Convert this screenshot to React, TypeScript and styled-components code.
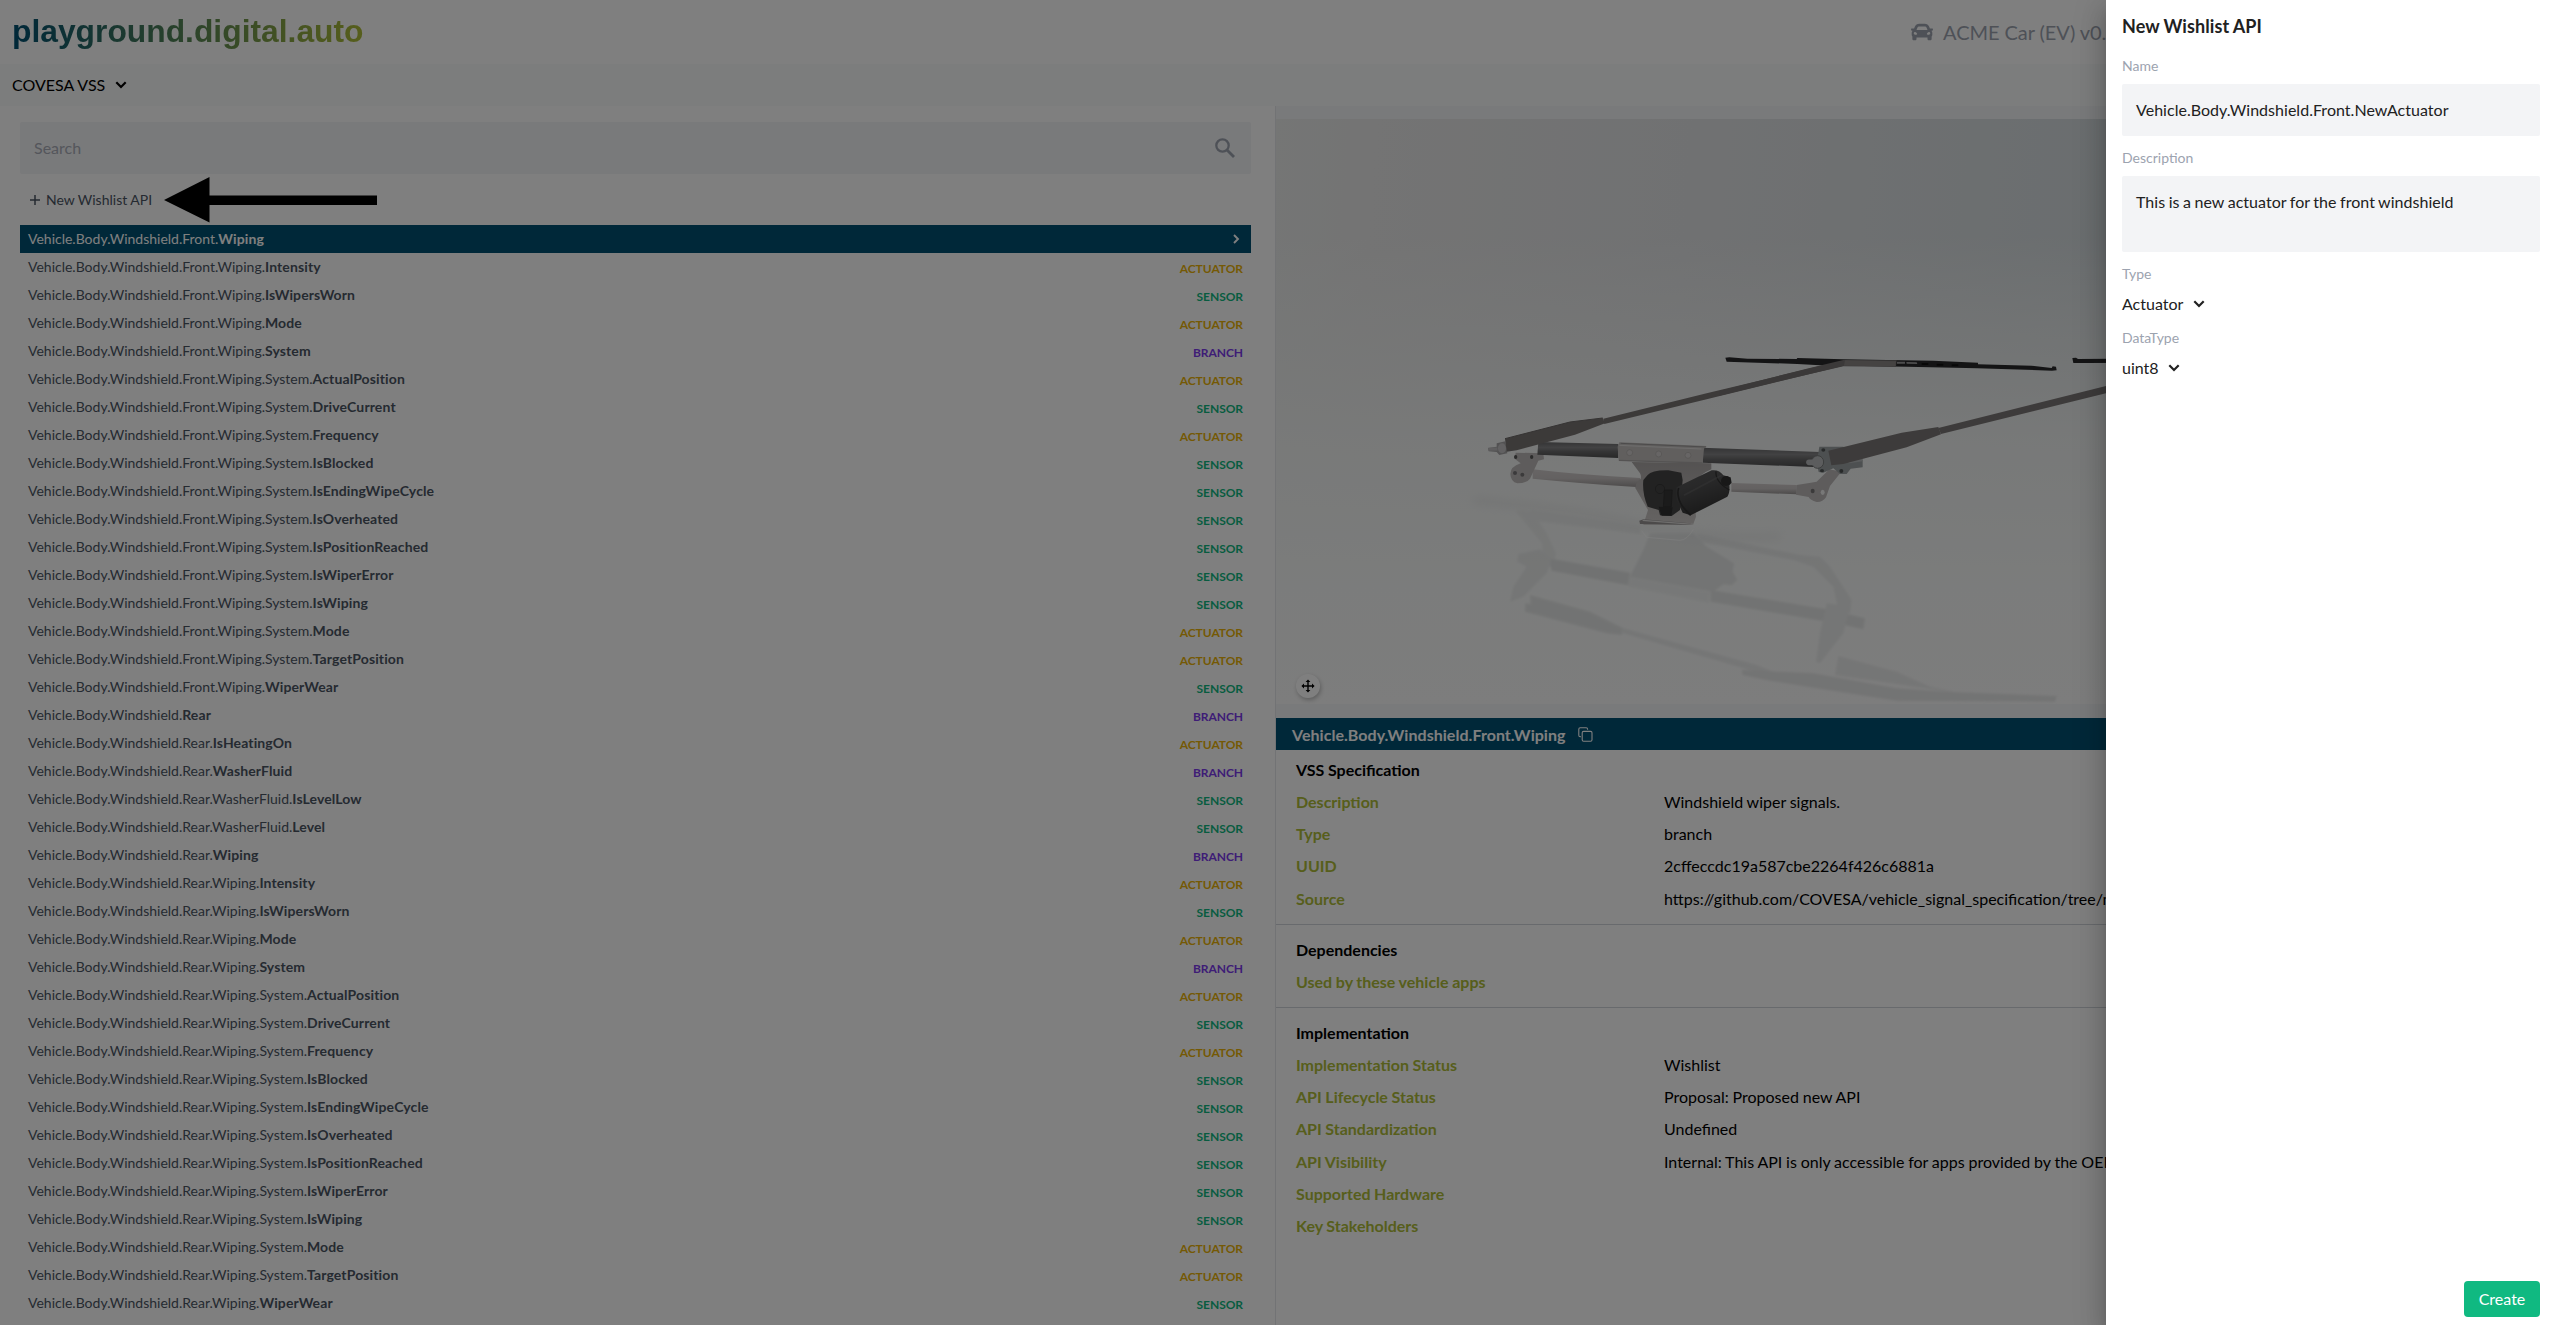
import React from "react";
import styled, { createGlobalStyle } from "styled-components";
import { FaCar } from "react-icons/fa";

const GlobalStyle = createGlobalStyle`
  *, *::before, *::after { box-sizing: border-box; }
  html, body { margin: 0; padding: 0; background: #fff; }
  body { overflow: hidden; font-family: Lato, "Open Sans", sans-serif; font-size: 16px; word-spacing: -0.3px; color: #000; }
`;

const Page = styled.div`
  display: flex;
  flex-direction: column;
  width: 2550px;
  height: 1325px;
  overflow: hidden;
  position: relative;
`;

const Header = styled.header`
  display: flex;
  align-items: center;
  justify-content: space-between;
  height: 64px;
  flex: none;
  padding: 0 16px 0 12px;
`;

const Logo = styled.div`
  font: 700 31.8px/40px "Liberation Sans", Arial, sans-serif;
  padding-bottom: 2px;
  color: transparent;
  background: linear-gradient(90deg, #005072, #aebd38);
  background-clip: text;
  -webkit-background-clip: text;
  white-space: nowrap;
`;

const ModelName = styled.div`
  display: flex;
  align-items: center;
  gap: 10px;
  width: 623px;
  font-size: 20px;
  line-height: 28px;
  word-spacing: -0.3px;
  color: #9ca3af;
  white-space: nowrap;
`;

const SubHeader = styled.div`
  display: flex;
  align-items: center;
  height: 42px;
  flex: none;
  padding: 0 12px;
  background: #f9fafb;
`;

const Select = styled.button<{ $gap?: number }>`
  display: flex;
  align-items: center;
  gap: ${(p) => p.$gap ?? 10}px;
  padding: 0;
  border: 0;
  background: none;
  font: inherit;
  line-height: 24px;
  color: inherit;
`;

const Columns = styled.main`
  display: flex;
  flex: 1;
  min-height: 0;
`;

const ListPanel = styled.section`
  width: 1275px;
  flex: none;
  padding: 16px 24px 0 20px;
  overflow: hidden;
`;

const SearchBox = styled.div`
  display: flex;
  align-items: center;
  justify-content: space-between;
  height: 52px;
  padding: 0 16px 1px 14px;
  border-radius: 2px;
  background: #f3f4f6;
  color: #a9adb8;
  svg { color: #9ca3af; }
`;

const NewApiRow = styled.div`
  display: flex;
  align-items: center;
  gap: 6px;
  height: 51px;
  padding: 0 0 0 10px;
  font-size: 14px;
  letter-spacing: 0.03px;
  color: #4b5563;
`;

const ApiRow = styled.div<{ $selected?: boolean }>`
  display: flex;
  align-items: center;
  justify-content: space-between;
  height: 28px;
  padding: 0 8px;
  font-size: 14px;
  line-height: 20px;
  background: ${(p) => (p.$selected ? "#005072" : "transparent")};
  color: ${(p) => (p.$selected ? "#fff" : "#4b5563")};
  b { font-weight: 700; letter-spacing: 0.12px; }
`;

const kindColor = { ACTUATOR: "#eab308", SENSOR: "#10b981", BRANCH: "#7c3aed" };
type Kind = keyof typeof kindColor;

const KindTag = styled.span<{ $kind: Kind }>`
  padding-top: 3px;
  font-size: 12px;
  line-height: 16px;
  font-weight: 700;
  letter-spacing: -0.05px;
  color: ${(p) => kindColor[p.$kind]};
`;

const DetailPanel = styled.section`
  display: flex;
  flex-direction: column;
  flex: 1;
  min-width: 0;
  border-left: 1px solid #e5e7eb;
`;

const Stage = styled.div`
  height: 612px;
  flex: none;
  padding: 13px 0 14px;
  background: #f3f4f6;
  position: relative;
  > svg { display: block; }
`;

const MoveButton = styled.div`
  position: absolute;
  left: 20px;
  top: 568px;
  width: 24px;
  height: 24px;
  border-radius: 50%;
  display: flex;
  align-items: center;
  justify-content: center;
  background: #fff;
  box-shadow: 1px 2px 4px rgba(0, 0, 0, 0.25);
`;

const DetailTitle = styled.div`
  display: flex;
  align-items: center;
  gap: 12px;
  height: 32px;
  flex: none;
  padding: 0 16px;
  background: #005072;
  color: #fff;
  font-weight: 700;
  letter-spacing: 0.04px;
`;

const DetailBlock = styled.div<{ $height: number }>`
  height: ${(p) => p.$height}px;
  flex: none;
  padding: 4px 20px 0;
  & + & { border-top: 1px solid #d1d5db; padding-top: 9px; }
`;

const BlockTitle = styled.div`
  height: 32px;
  line-height: 32px;
  font-weight: 700;
`;

const Entry = styled.div<{ $tall?: boolean }>`
  display: grid;
  grid-template-columns: 368px 1fr;
  height: ${(p) => (p.$tall ? 33 : 32)}px;
  line-height: ${(p) => (p.$tall ? 34 : 32)}px;
  white-space: nowrap;
`;

const EntryLabel = styled.span`
  font-weight: 700;
  color: #aebd38;
`;

const Arrow = styled.svg`
  position: absolute;
  left: 164px;
  top: 177px;
`;

const Backdrop = styled.div`
  position: absolute;
  inset: 0;
  background: rgba(0, 0, 0, 0.5);
`;

const Drawer = styled.aside`
  position: absolute;
  top: 0;
  right: 0;
  bottom: 0;
  width: 444px;
  display: flex;
  flex-direction: column;
  padding: 12px 10px 8px 16px;
  background: #fff;
  color: #212121;
  box-shadow: 0 8px 10px -5px rgba(0, 0, 0, 0.2), 0 16px 24px 2px rgba(0, 0, 0, 0.14),
    0 6px 30px 5px rgba(0, 0, 0, 0.12);
`;

const DrawerTitle = styled.h2`
  margin: 0 0 16px;
  font-size: 18px;
  line-height: 28px;
  font-weight: 700;
  letter-spacing: 0.08px;
`;

const FieldLabel = styled.label`
  font-size: 14px;
  line-height: 20px;
  color: #9ca3af;
`;

const Field = styled.div<{ $height: number; $after: number }>`
  height: ${(p) => p.$height}px;
  margin: 8px 0 ${(p) => p.$after}px;
  padding: 14px;
  line-height: 24px;
  letter-spacing: 0.03px;
  word-spacing: -0.6px;
  border-radius: 2px;
  background: #f3f4f6;
`;

const SelectField = styled.div`
  margin: 8px 0 12px;
`;

const Footer = styled.div`
  display: flex;
  justify-content: flex-end;
  margin-top: auto;
`;

const CreateButton = styled.button`
  width: 76px;
  height: 36px;
  padding: 0;
  border: 0;
  border-radius: 4px;
  background: #10b981;
  color: #fff;
  font: 16px/24px Lato, sans-serif;
`;

const ChevronDown = () => (
  <svg width="12" height="8" viewBox="0 0 12 8" fill="none" stroke="currentColor" strokeWidth="2.2">
    <path d="M1.3 1.3 6 6 10.7 1.3" />
  </svg>
);

const front = "Vehicle.Body.Windshield.Front.";
const rear = "Vehicle.Body.Windshield.Rear.";

const wiping = (side: string): [string, string, Kind][] => {
  const w = side + "Wiping.";
  const s = w + "System.";
  return [
    [w, "Intensity", "ACTUATOR"],
    [w, "IsWipersWorn", "SENSOR"],
    [w, "Mode", "ACTUATOR"],
    [w, "System", "BRANCH"],
    [s, "ActualPosition", "ACTUATOR"],
    [s, "DriveCurrent", "SENSOR"],
    [s, "Frequency", "ACTUATOR"],
    [s, "IsBlocked", "SENSOR"],
    [s, "IsEndingWipeCycle", "SENSOR"],
    [s, "IsOverheated", "SENSOR"],
    [s, "IsPositionReached", "SENSOR"],
    [s, "IsWiperError", "SENSOR"],
    [s, "IsWiping", "SENSOR"],
    [s, "Mode", "ACTUATOR"],
    [s, "TargetPosition", "ACTUATOR"],
    [w, "WiperWear", "SENSOR"],
  ];
};

const apis: [string, string, Kind][] = [
  ...wiping(front),
  ["Vehicle.Body.Windshield.", "Rear", "BRANCH"],
  [rear, "IsHeatingOn", "ACTUATOR"],
  [rear, "WasherFluid", "BRANCH"],
  [rear + "WasherFluid.", "IsLevelLow", "SENSOR"],
  [rear + "WasherFluid.", "Level", "SENSOR"],
  [rear, "Wiping", "BRANCH"],
  ...wiping(rear),
];

const WiperScene = () => (
  <svg width="1274" height="585" viewBox="0 0 1274 585">
    <defs>
      <linearGradient id="wall" x1="0" y1="0" x2="830" y2="60" gradientUnits="userSpaceOnUse">
        <stop offset="0" stopColor="#eaeceb" />
        <stop offset="0.12" stopColor="#e8e8e8" />
        <stop offset="0.5" stopColor="#e1e3e5" />
        <stop offset="1" stopColor="#d5dcdf" />
      </linearGradient>
      <linearGradient id="floor" x1="0" y1="0" x2="0" y2="585" gradientUnits="userSpaceOnUse">
        <stop offset="0.2" stopColor="#f1f3f2" stopOpacity="0" />
        <stop offset="0.36" stopColor="#f0f2f1" stopOpacity="0.5" />
        <stop offset="0.55" stopColor="#f3f5f4" stopOpacity="0.88" />
        <stop offset="0.8" stopColor="#f7f9f8" />
        <stop offset="1" stopColor="#fafafa" />
      </linearGradient>
      <linearGradient id="tube" x1="0" y1="0" x2="0" y2="1">
        <stop offset="0" stopColor="#68686a" />
        <stop offset="0.35" stopColor="#858587" />
        <stop offset="0.6" stopColor="#6a6a6b" />
        <stop offset="1" stopColor="#505051" />
      </linearGradient>
      <linearGradient id="rod" x1="0" y1="0" x2="0" y2="1">
        <stop offset="0" stopColor="#cfcaca" />
        <stop offset="0.5" stopColor="#c8c3c3" />
        <stop offset="1" stopColor="#989494" />
      </linearGradient>
      <linearGradient id="plate" x1="0" y1="0" x2="0" y2="1">
        <stop offset="0" stopColor="#a9a5a4" />
        <stop offset="1" stopColor="#cbc7c5" />
      </linearGradient>
      <linearGradient id="motor" x1="0" y1="0" x2="0.4" y2="1">
        <stop offset="0" stopColor="#5b5b5b" />
        <stop offset="0.4" stopColor="#525253" />
        <stop offset="1" stopColor="#343434" />
      </linearGradient>
      <filter id="soft" x="-10%" y="-30%" width="120%" height="160%">
        <feGaussianBlur stdDeviation="2.5" />
      </filter>
      <filter id="haze" x="-20%" y="-100%" width="140%" height="300%">
        <feGaussianBlur stdDeviation="12" />
      </filter>
    </defs>
    <rect width="1274" height="585" fill="url(#wall)" />
    <rect width="1274" height="585" fill="url(#floor)" />

    <g transform="translate(204 281) scale(.33333)">
      {/* floor shadow and reflections */}
      <path d="M-20 300 Q300 330 480 375 T900 410" fill="none" stroke="#dadcdb" strokeWidth="22" opacity=".4" filter="url(#haze)" />
      <g filter="url(#soft)" fill="#e3e5e5" opacity=".62">
        <path d="M108 335 Q130 325 160 340 L200 400 228 460 222 490 190 480 186 430Z" fill="#e7e9e8" />
        <path d="M150 330 480 378 480 402 160 362Z" fill="#e6e8e8" />
        <path d="M650 400 960 465 1020 470 1050 500 1115 600 1110 640 1075 630 1060 560 1000 500 940 480 660 425Z" />
        <path d="M510 400 640 400 680 440 762 490 758 515 772 540 755 556 730 553 700 575 450 530 490 450Z" fill="#dddfdf" />
        <path d="M205 475 450 518 445 556 215 512Z" fill="#d7d9d9" />
        <path d="M450 530 690 575 688 610 446 560Z" fill="#ebeded" />
        <path d="M692 570 1040 628 1155 655 1150 688 1080 672 692 605Z" fill="#dadcdc" />
        <path d="M115 462 180 448 215 480 200 520 130 590 90 605 100 560 140 500 112 485Z" />
        <path d="M1040 610 1110 620 1090 700 1020 790 1008 785 1020 700Z" />
        <path d="M150 585 330 635 430 685 425 705 380 700 135 635 136 610 152 612Z" fill="#dbdddd" />
        <path d="M425 683 830 795 880 815 860 825 425 698Z" />
        <path d="M1075 768 1250 815 1350 860 1440 880 1065 825Z" />
        <path d="M785 810 1000 820 1250 865 1400 875 1730 888 1725 905 1250 902 1120 882 870 842 788 825Z" fill="#dcdede" />
      </g>
      <path d="M485 392 500 412 600 421 Q622 420 640 388" fill="none" stroke="#fff" strokeWidth="3" opacity=".6" />

      {/* left lever and linkage rods */}
      <path d="M158 208 Q300 225 480 234 L480 262 Q300 250 158 236Z" fill="url(#rod)" />
      <path d="M754 249 950 255 950 283 754 275Z" fill="url(#rod)" />
      <path d="M107 158 190 160 192 178 175 182 150 236 Q140 250 112 250 92 245 91 222 91 200 122 190 L104 176Z" fill="#bdb9b8" />
      <circle cx="105" cy="219" r="6" fill="#777576" />
      <circle cx="127" cy="224" r="6" fill="#777576" />
      <ellipse cx="107" cy="171" rx="5" ry="6" fill="#575656" />
      <ellipse cx="155" cy="171" rx="5" ry="6" fill="#575656" />

      {/* cross tubes */}
      <path d="M175 126 415 132 415 174 172 164Z" fill="url(#tube)" />
      <path d="M665 143 1020 156 1000 201 668 188Z" fill="url(#tube)" />

      {/* motor bracket */}
      <path d="M455 186 694 190 694 208 Q650 225 640 260 L648 350 640 372 490 374 504 330 466 264Q490 236 480 220Z" fill="url(#plate)" />
      <path d="M466 264 Q466 240 490 235 L495 274Z" fill="#b5b1b0" />
      <path d="M478 362 490 358 630 370 638 375 480 372Z" fill="#989595" />
      <path d="M488 361 640 373" stroke="#dedcdb" strokeWidth="4" />
      <path d="M418 127 680 138 672 146 668 190 416 182 413 140Z" fill="#c2bfbd" />
      <path d="M422 130 678 141" stroke="#9a9898" strokeWidth="3" />
      <path d="M418 136 664 147" stroke="#dddbda" strokeWidth="3" />
      <path d="M417 181 668 189" stroke="#aaa7a6" strokeWidth="4" />
      <g fill="#cecbca" stroke="#aaa6a5" strokeWidth="2">
        <circle cx="449" cy="158" r="9" />
        <circle cx="536" cy="162" r="9" />
        <circle cx="624" cy="166" r="9" />
      </g>

      {/* motor */}
      <path d="M503 225 Q515 210 565 211 L604 218 608 240 600 330 575 348 540 346 536 330 503 320 Q486 280 490 240Z" fill="#454545" />
      <path d="M590 262 695 211 Q718 208 730 226 L752 232 755 248 748 256 Q750 280 742 290 L632 346 608 338 590 300Z" fill="url(#motor)" />
      <path d="M596 264 Q588 290 608 320 L632 346" fill="none" stroke="#303030" strokeWidth="5" />
      <path d="M708 214 Q705 245 748 270" fill="none" stroke="#303030" strokeWidth="4" />
      <path d="M612 286 725 226" stroke="#696969" strokeWidth="5" opacity=".55" />
      <circle cx="738" cy="243" r="15" fill="#303030" />
      <circle cx="540" cy="267" r="14" fill="none" stroke="#363636" strokeWidth="3" />
      <path d="M553 270 577 270 574 320 550 320Z" fill="#363636" stroke="#2c2c2c" strokeWidth="2" />
      <path d="M536 320 578 322 574 347 545 347Z" fill="#303030" />

      {/* left pivot and arm */}
      <path d="M24 144 50 140 50 130 76 124 82 160 58 165 50 156 26 154Z" fill="#a6a5a6" />
      <ellipse cx="66" cy="145" rx="12" ry="15" fill="#c4c3c4" />
      <path d="M25 148 52 147" stroke="#bebdbe" strokeWidth="9" />
      <path d="M75 116 270 66 368 54 375 70 285 104 110 151 80 155Z" fill="#787473" />
      <path d="M75 116 270 66 368 54" fill="none" stroke="#6a6665" strokeWidth="3" />
      <path d="M370 56 680 -20 1086 -118 1088 -102 680 -2 373 72Z" fill="#787473" />

      {/* right pivot */}
      <path d="M950 255 988 249 1010 245 1048 208 1084 215 1050 258 1038 292 Q1028 307 1010 306 990 300 986 291L948 284Z" fill="#bcb8b8" />
      <ellipse cx="998" cy="273" rx="6" ry="7" fill="#777576" />
      <ellipse cx="1028" cy="277" rx="6" ry="8" fill="#f0f0f0" />
      <path d="M1018 140 1090 140 1120 178 1148 178 1148 202 1112 206 1100 222 1080 222 1060 205 1030 218 1016 216 1010 190Z" fill="#9ba1a2" />
      <path d="M1105 186 1147 180" stroke="#b5b9ba" strokeWidth="7" />
      <ellipse cx="1030" cy="150" rx="6" ry="5" fill="#505455" />
      <ellipse cx="1026" cy="212" rx="6" ry="5" fill="#505455" />
      <ellipse cx="1084" cy="213" rx="6" ry="6" fill="#505455" />
      <ellipse cx="1013" cy="186" rx="18" ry="19" fill="#b9bbbc" stroke="#777a7b" strokeWidth="3" />
      <path d="M987 187 1010 187" stroke="#b9babc" strokeWidth="17" strokeLinecap="round" />
    </g>

    <g transform="translate(444 221) scale(.33333)">
      {/* right arm */}
      <path d="M325 332 545 278 655 261 663 283 560 322 370 372 334 376Z" fill="#7b7776" />
      <path d="M655 264 1158 138 1500 52 1500 72 1158 160 663 282Z" fill="#7b7776" />
      {/* blades */}
      <path d="M16 53 28 52 82 56 230 57 232 54 370 58 500 60 640 62 774 68 774 73 935 77 995 84 998 79 1008 80 1010 91 996 92 772 85 560 80 300 76 232 72 20 65Z" fill="#29292b" />
      <path d="M-2 153 260 86 370 60 530 61 528 80 370 79 260 104 -2 167Z" fill="#777372" />
      <path d="M375 61 528 64 526 79 372 77Z" fill="#8a8685" />
      <path d="M531 65 555 65 555 71 531 71ZM559 66 590 67 592 72 560 71Z" fill="#9b9b9c" />
      <path d="M605 72H625M650 74H670M695 76H715" stroke="#111" strokeWidth="6" />
      <path d="M1057 54 1068 53 1074 57 1500 54 1500 68 1060 69Z" fill="#29292b" />
    </g>
  </svg>
);

export default function App() {
  return (
    <Page>
      <GlobalStyle />
      <Header>
        <Logo>playground.digital.auto</Logo>
        <ModelName>
          <FaCar size={22} />
          ACME Car (EV) v0.1
        </ModelName>
      </Header>
      <SubHeader>
        <Select>
          COVESA VSS <ChevronDown />
        </Select>
      </SubHeader>
      <Columns>
        <ListPanel>
          <SearchBox>
            Search
            <svg width="20" height="20" viewBox="0 0 20 20" fill="none" stroke="currentColor" strokeWidth="2.3">
              <circle cx="7.5" cy="7.5" r="6.2" />
              <path d="M12 12 19 19" strokeWidth="2.8" />
            </svg>
          </SearchBox>
          <NewApiRow>
            <svg width="10" height="10" viewBox="0 0 10 10" stroke="currentColor" strokeWidth="1.5">
              <path d="M5 0V10M0 5H10" />
            </svg>
            New Wishlist API
          </NewApiRow>
          <ApiRow $selected>
            <span>
              {front}
              <b>Wiping</b>
            </span>
            <svg width="14" height="10" viewBox="0 0 14 10" fill="none" stroke="currentColor" strokeWidth="1.9">
              <path d="M5 1 9 5 5 9" />
            </svg>
          </ApiRow>
          {apis.map(([path, name, kind]) => (
            <ApiRow key={path + name}>
              <span>
                {path}
                <b>{name}</b>
              </span>
              <KindTag $kind={kind}>{kind}</KindTag>
            </ApiRow>
          ))}
        </ListPanel>
        <DetailPanel>
          <Stage>
            <WiperScene />
            <MoveButton>
              <svg width="14" height="14" viewBox="0 0 14 14" fill="#000">
                <path d="M6.3 3H4.6L7 .4 9.4 3H7.7V6.3H11V4.6L13.6 7 11 9.4V7.7H7.7V11H9.4L7 13.6 4.6 11H6.3V7.7H3V9.4L.4 7 3 4.6V6.3H6.3Z" />
              </svg>
            </MoveButton>
          </Stage>
          <DetailTitle>
            Vehicle.Body.Windshield.Front.Wiping
            <svg width="15" height="15" viewBox="0 0 15 15" fill="none" stroke="#fff" strokeWidth="1.1">
              <rect x="4.2" y="4.4" width="9.8" height="9.8" rx="1.4" />
              <path d="M2.8 9.6H2.2Q.8 9.6.8 8.2V2.2Q.8.8 2.2.8H8.2Q9.6.8 9.6 2.2V2.8" />
            </svg>
          </DetailTitle>
          <DetailBlock $height={174}>
            <BlockTitle>VSS Specification</BlockTitle>
            <Entry><EntryLabel>Description</EntryLabel><span>Windshield wiper signals.</span></Entry>
            <Entry><EntryLabel>Type</EntryLabel><span>branch</span></Entry>
            <Entry><EntryLabel>UUID</EntryLabel><span>2cffeccdc19a587cbe2264f426c6881a</span></Entry>
            <Entry $tall><EntryLabel>Source</EntryLabel><span>https://github.com/COVESA/vehicle_signal_specification/tree/master</span></Entry>
          </DetailBlock>
          <DetailBlock $height={83}>
            <BlockTitle>Dependencies</BlockTitle>
            <Entry><EntryLabel>Used by these vehicle apps</EntryLabel></Entry>
          </DetailBlock>
          <DetailBlock $height={240}>
            <BlockTitle>Implementation</BlockTitle>
            <Entry><EntryLabel>Implementation Status</EntryLabel><span>Wishlist</span></Entry>
            <Entry><EntryLabel>API Lifecycle Status</EntryLabel><span>Proposal: Proposed new API</span></Entry>
            <Entry><EntryLabel>API Standardization</EntryLabel><span>Undefined</span></Entry>
            <Entry $tall><EntryLabel>API Visibility</EntryLabel><span>Internal: This API is only accessible for apps provided by the OEM</span></Entry>
            <Entry><EntryLabel>Supported Hardware</EntryLabel></Entry>
            <Entry><EntryLabel>Key Stakeholders</EntryLabel></Entry>
          </DetailBlock>
        </DetailPanel>
      </Columns>
      <Backdrop />
      <Arrow width="214" height="46" viewBox="0 0 214 46">
        <path d="M0 23 45.5 0V18.5H213V28H45.5V45.5Z" />
      </Arrow>
      <Drawer>
        <DrawerTitle>New Wishlist API</DrawerTitle>
        <FieldLabel>Name</FieldLabel>
        <Field $height={52} $after={12}>Vehicle.Body.Windshield.Front.NewActuator</Field>
        <FieldLabel>Description</FieldLabel>
        <Field $height={76} $after={12}>This is a new actuator for the front windshield</Field>
        <FieldLabel>Type</FieldLabel>
        <SelectField>
          <Select $gap={10}>Actuator <ChevronDown /></Select>
        </SelectField>
        <FieldLabel>DataType</FieldLabel>
        <SelectField>
          <Select $gap={9}>uint8 <ChevronDown /></Select>
        </SelectField>
        <Footer>
          <CreateButton>Create</CreateButton>
        </Footer>
      </Drawer>
    </Page>
  );
}
